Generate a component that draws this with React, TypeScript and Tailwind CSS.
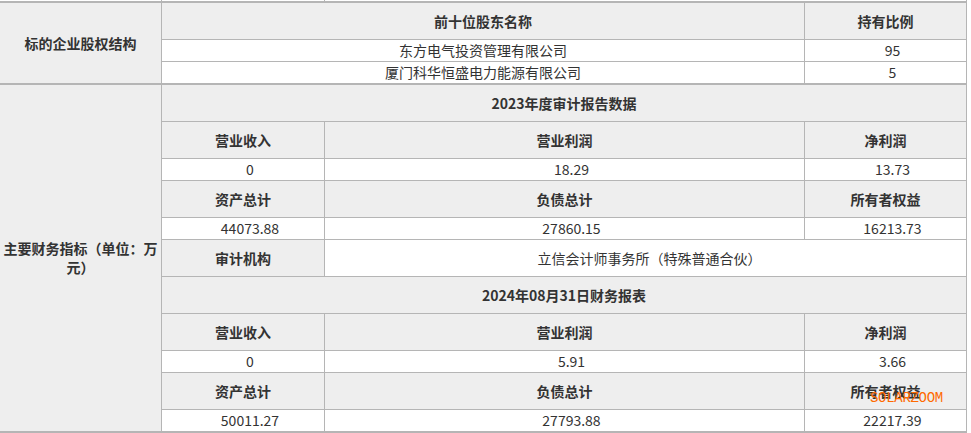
import React from "react";

const cell = "flex items-center justify-center border-r border-b border-[#b5b5b5] text-[14px] text-[#333]";
const head = `${cell} bg-[#eeeeee] font-bold`;
const val = `${cell} bg-white pl-[14px]`;
const thick = "border-b-2";

type Row = [string, string, string];

// one dated block: title row, then header / value row pairs
const Section = ({ title, heads, values, last }: { title: string; heads: Row[]; values: Row[]; last?: boolean }) => (
  <>
    <div className={`${head} col-span-3`}>{title}</div>
    {heads.map((h, i) => (
      <React.Fragment key={i}>
        {h.map((t, j) => (
          <div key={`h${j}`} className={head}>{t}</div>
        ))}
        {values[i].map((t, j) => (
          <div key={`v${j}`} className={`${val} ${last && i === heads.length - 1 ? thick : ""}`}>
            {t}
          </div>
        ))}
      </React.Fragment>
    ))}
  </>
);

const App = () => {
  return (
    <div
      className="relative w-[971px] h-[433px] bg-white overflow-hidden"
      style={{ fontFamily: '"Noto Sans CJK SC", "Noto Sans", sans-serif' }}
    >
      {/* leftover of the row above */}
      <div className="grid grid-cols-[162px_163px_642px] h-[1px]">
        <div className="border-r border-[#b5b5b5]" />
        <div className="border-r border-[#b5b5b5]" />
        <div className="border-r border-[#b5b5b5]" />
      </div>

      <div className="w-[967px] border-t-2 border-[#b5b5b5] grid grid-cols-[162px_163px_480px_162px] grid-rows-[37px_22px_23px_37px_37px_22px_37px_22px_37px_37px_37px_22px_37px_23px]">
        {/* 股权结构 */}
        <div className={`${head} row-span-3 ${thick}`}>标的企业股权结构</div>
        <div className={`${head} col-span-2`}>前十位股东名称</div>
        <div className={head}>持有比例</div>
        <div className={`${cell} bg-white col-span-2`}>东方电气投资管理有限公司</div>
        <div className={val}>95</div>
        <div className={`${cell} bg-white col-span-2 ${thick}`}>厦门科华恒盛电力能源有限公司</div>
        <div className={`${val} ${thick}`}>5</div>

        {/* 财务指标 */}
        <div className={`${head} row-span-11 ${thick} px-[3px] text-center leading-[19px]`}>
          主要财务指标（单位：万元）
        </div>

        <Section
          title="2023年度审计报告数据"
          heads={[
            ["营业收入", "营业利润", "净利润"],
            ["资产总计", "负债总计", "所有者权益"],
          ]}
          values={[
            ["0", "18.29", "13.73"],
            ["44073.88", "27860.15", "16213.73"],
          ]}
        />
        <div className={head}>审计机构</div>
        <div className={`${cell} bg-white col-span-2 pl-[8px]`}>立信会计师事务所（特殊普通合伙）</div>

        <Section
          title="2024年08月31日财务报表"
          heads={[
            ["营业收入", "营业利润", "净利润"],
            ["资产总计", "负债总计", "所有者权益"],
          ]}
          values={[
            ["0", "5.91", "3.66"],
            ["50011.27", "27793.88", "22217.39"],
          ]}
          last
        />
      </div>

      {/* watermark */}
      <div
        className="absolute left-[870px] top-[390px] text-[14px] leading-[16px] text-[#ff6a00] tracking-[-0.3px]"
        style={{ fontFamily: '"Liberation Mono", monospace' }}
      >
        SOLARZOOM
      </div>
    </div>
  );
};

export default App;
